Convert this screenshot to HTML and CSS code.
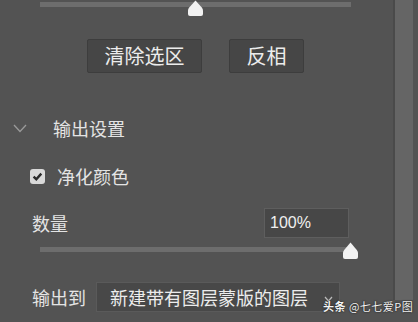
FILE: index.html
```html
<!DOCTYPE html>
<html lang="zh">
<head>
<meta charset="utf-8">
<link rel="stylesheet" href="styles.css">
</head>
<body>
<div class="panel">
  <div class="content">
    <div class="slider slider-top">
      <div class="track"></div>
      <svg class="thumb" style="left:148px" width="15" height="16" viewBox="0 0 15 16"><path d="M7.5 0.5 L13.8 7.6 Q15 9 15 10.5 L15 14 Q15 16 13 16 L2 16 Q0 16 0 14 L0 10.5 Q0 9 1.2 7.6 Z" fill="#f2f2f2"/></svg>
    </div>
    <div class="btn-row">
      <div class="btn btn-wide">清除选区</div>
      <div class="btn btn-narrow">反相</div>
    </div>
    <div class="section-head">
      <svg class="chev" width="14" height="9" viewBox="0 0 14 9"><polyline points="1,1 7,7.5 13,1" fill="none" stroke="#9a9a9a" stroke-width="1.3"/></svg>
      <span class="section-title">输出设置</span>
    </div>
    <div class="check-row">
      <span class="checkbox"><svg width="15" height="15" viewBox="0 0 15 15"><polyline points="3.6,7.6 6.3,10.2 11.3,4.6" fill="none" stroke="#2b2b2b" stroke-width="2.4"/></svg></span>
      <span class="label">净化颜色</span>
    </div>
    <div class="amount-row">
      <span class="label">数量</span>
      <div class="input">100%</div>
    </div>
    <div class="slider slider-amount">
      <div class="track"></div>
      <svg class="thumb" style="left:303px" width="15" height="17" viewBox="0 0 15 17"><path d="M7.5 0.5 L13.8 8 Q15 9.5 15 11 L15 15 Q15 17 13 17 L2 17 Q0 17 0 15 L0 11 Q0 9.5 1.2 8 Z" fill="#f2f2f2"/></svg>
    </div>
    <div class="output-row">
      <span class="label">输出到</span>
      <div class="select">
        <span class="select-text">新建带有图层蒙版的图层</span>
        <svg class="select-arrow" width="9" height="6" viewBox="0 0 9 6"><polyline points="1,1 4.5,5 8,1" fill="none" stroke="#bbbbbb" stroke-width="1.2"/></svg>
      </div>
    </div>
  </div>
  <div class="scrollbar"></div>
</div>
<div class="watermark"><b>头条</b> @七七爱P图</div>
</body>
</html>
```
FILE: styles.css
```css
html, body {
  margin: 0;
  padding: 0;
  background: #535353;
  width: 418px;
  height: 322px;
  overflow: hidden;
  font-family: "Noto Sans CJK SC", "Microsoft YaHei", sans-serif;
  color: #e4e4e4;
}
.panel {
  display: flex;
  height: 322px;
}
.content {
  width: 393px;
  display: flex;
  flex-direction: column;
}
.scrollbar {
  width: 18px;
  height: 300px;
  background: #656565;
  border-left: 2px solid #4a4a4a;
}
.slider {
  position: relative;
  margin-left: 40px;
}
.slider .track {
  background: #6d6d6d;
}
.slider .thumb {
  position: absolute;
  top: 0;
}
.slider-top {
  width: 311px;
  height: 16px;
}
.slider-top .track {
  margin-top: 2px;
  height: 5px;
}
.btn-row {
  display: flex;
  gap: 27px;
  margin-top: 23px;
  padding-left: 87px;
}
.btn {
  height: 32px;
  background: #464646;
  border: 1px solid #3d3d3d;
  border-radius: 2px;
  display: flex;
  align-items: center;
  justify-content: center;
  font-size: 20px;
  line-height: 1;
  color: #ececec;
}
.btn-wide { width: 113px; }
.btn-narrow { width: 73px; }
.section-head {
  display: flex;
  align-items: center;
  height: 20px;
  margin-top: 45px;
  padding-left: 13px;
}
.chev { display: block; }
.section-title {
  margin-left: 26px;
  font-size: 18px;
  line-height: 1;
}
.check-row {
  display: flex;
  align-items: center;
  height: 20px;
  margin-top: 28px;
  padding-left: 30px;
}
.checkbox {
  width: 15px;
  height: 15px;
  border-radius: 3px;
  background: #d9d9d9;
  display: block;
}
.checkbox svg { display: block; }
.label {
  font-size: 18px;
  line-height: 1;
  white-space: nowrap;
}
.check-row .label { margin-left: 12px; }
.amount-row {
  display: flex;
  align-items: center;
  justify-content: space-between;
  height: 30px;
  margin-top: 22px;
  padding-left: 32px;
  padding-right: 44px;
}
.input {
  width: 78px;
  height: 28px;
  background: #474747;
  border: 1px solid #5e5e5e;
  font-family: "Liberation Sans", Arial, sans-serif;
  font-size: 16px;
  line-height: 28px;
  padding-left: 5px;
  color: #f0f0f0;
}
.slider-amount {
  width: 310px;
  height: 17px;
  margin-top: 4px;
}
.slider-amount .track {
  margin-top: 5px;
  height: 5px;
}
.output-row {
  display: flex;
  align-items: center;
  height: 30px;
  margin-top: 23px;
  padding-left: 32px;
}
.output-row .label { width: 64px; flex-shrink: 0; }
.select {
  width: 223px;
  height: 28px;
  background: #484848;
  border: 1px solid #5a5a5a;
  display: flex;
  align-items: center;
  justify-content: space-between;
  padding: 0 6px 0 13px;
  flex-shrink: 0;
}
.select-text {
  font-size: 18px;
  line-height: 1;
  color: #ececec;
  white-space: nowrap;
  flex-shrink: 0;
}
.select-arrow { display: block; margin-top: 4px; flex-shrink: 0; }
.watermark {
  position: absolute;
  left: 323px;
  top: 299px;
  font-size: 11px;
  line-height: 14px;
  letter-spacing: 0.5px;
  color: #f4f4f4;
  text-shadow: 0 0 2px #222, 0 0 1px #222;
  white-space: nowrap;
}
.watermark b { font-weight: 700; }
```
